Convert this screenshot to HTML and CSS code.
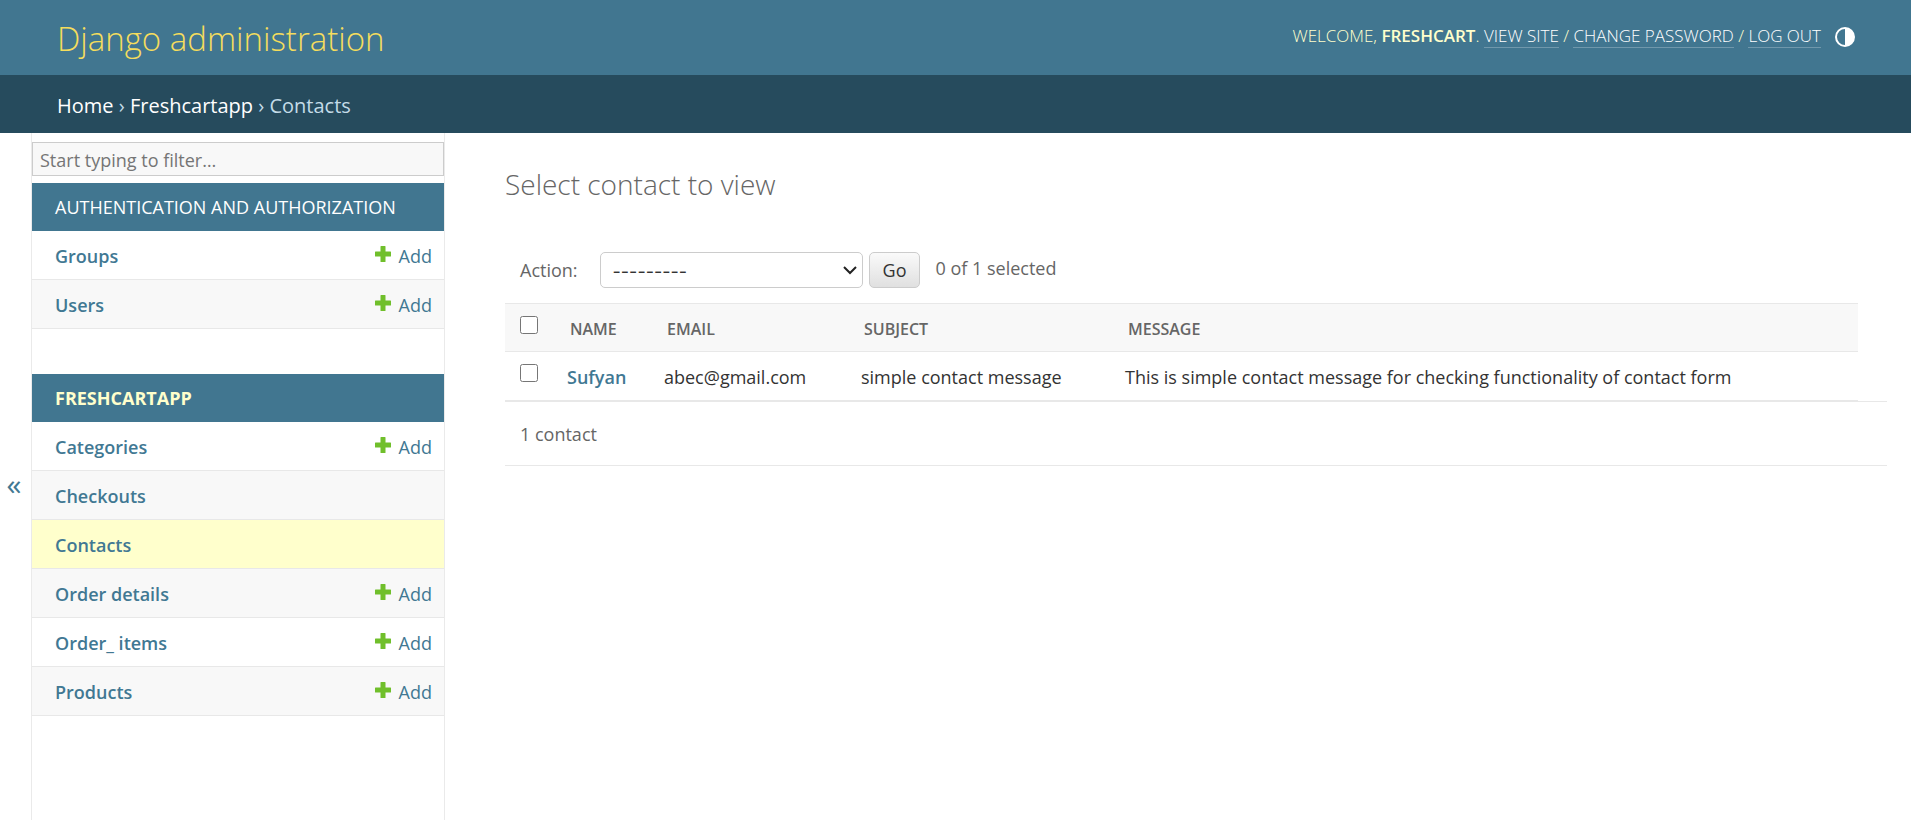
FILE: index.html
```html
<!DOCTYPE html>
<html lang="en">
<head>
<meta charset="utf-8">
<title>Select contact to view | Django site admin</title>
<link rel="stylesheet" href="styles.css">
</head>
<body>
<svg class="sprite" aria-hidden="true">
  <symbol id="plus" viewBox="0 0 16 16"><path fill="#70bf2b" d="M6 0h4q.5 0 .5.5v5h5q.5 0 .5.500v4q0 .5-.5.5h-5v5q0 .5-.5.5H6q-.5 0-.5-.5v-5h-5Q0 10.500 0 10V6q0-.5.5-.5h5v-5Q5.500 0 6 0z"/></symbol>
</svg>
<header class="header">
  <h1 class="site-name"><a href="#">Django administration</a></h1>
  <div class="user-tools">
    <span>Welcome, <strong>freshcart</strong>. <a href="#">View site</a> / <a href="#">Change password</a> / <a href="#">Log out</a></span>
    <button class="theme-toggle" type="button" aria-label="Toggle theme">
      <svg viewBox="0 0 20 20"><circle cx="10" cy="10" r="9" fill="none" stroke="#fff" stroke-width="2"/><path d="M10 1a9 9 0 0 1 0 18z" fill="#fff"/></svg>
    </button>
  </div>
</header>
<nav class="breadcrumbs" aria-label="Breadcrumbs"><a href="#">Home</a> › <a href="#">Freshcartapp</a> › Contacts</nav>
<div class="main">
  <button class="toggle-nav" type="button" aria-label="Toggle navigation">«</button>
  <nav class="sidebar" aria-label="Sidebar">
    <input class="filter" type="search" placeholder="Start typing to filter…" aria-label="Filter navigation items">
    <section class="module">
      <h2 class="caption"><a href="#">Authentication and Authorization</a></h2>
      <ul class="models">
        <li><a class="model" href="#">Groups</a><a class="add" href="#"><svg><use href="#plus"/></svg>Add</a></li>
        <li><a class="model" href="#">Users</a><a class="add" href="#"><svg><use href="#plus"/></svg>Add</a></li>
      </ul>
    </section>
    <section class="module">
      <h2 class="caption current-app"><a href="#">Freshcartapp</a></h2>
      <ul class="models">
        <li><a class="model" href="#">Categories</a><a class="add" href="#"><svg><use href="#plus"/></svg>Add</a></li>
        <li><a class="model" href="#">Checkouts</a></li>
        <li class="current"><a class="model" href="#">Contacts</a></li>
        <li><a class="model" href="#">Order details</a><a class="add" href="#"><svg><use href="#plus"/></svg>Add</a></li>
        <li><a class="model" href="#">Order_ items</a><a class="add" href="#"><svg><use href="#plus"/></svg>Add</a></li>
        <li><a class="model" href="#">Products</a><a class="add" href="#"><svg><use href="#plus"/></svg>Add</a></li>
      </ul>
    </section>
  </nav>
  <main class="content">
    <h2 class="title">Select contact to view</h2>
    <form class="changelist">
      <div class="actions">
        <label for="action">Action:</label>
        <select id="action"><option>---------</option></select>
        <button class="go" type="submit">Go</button>
        <span class="counter">0 of 1 selected</span>
      </div>
      <table class="results">
        <colgroup><col class="col-check"><col class="col-name"><col class="col-email"><col class="col-subject"><col></colgroup>
        <thead>
          <tr><th><input type="checkbox" aria-label="Select all contacts"></th><th scope="col">Name</th><th scope="col">Email</th><th scope="col">Subject</th><th scope="col">Message</th></tr>
        </thead>
        <tbody>
          <tr><td><input type="checkbox" aria-label="Select Sufyan"></td><th scope="row"><a href="#">Sufyan</a></th><td>abec@gmail.com</td><td>simple contact message</td><td>This is simple contact message for checking functionality of contact form</td></tr>
        </tbody>
      </table>
      <p class="paginator">1 contact</p>
    </form>
  </main>
</div>
</body>
</html>
```
FILE: styles.css
```css
* { box-sizing: border-box; }
body {
  margin: 0;
  min-height: 100vh;
  display: flex;
  flex-direction: column;
  background: #fff;
  color: #333;
  font: 18px/24px "Open Sans", "Noto Sans", sans-serif;
}
a { color: #417893; text-decoration: none; }
button, input, select { font: inherit; }
.sprite { display: none; }

.header {
  display: flex;
  justify-content: space-between;
  align-items: center;
  height: 75px;
  padding: 0 56px 0 57px;
  background: #417690;
  color: #ffc;
}
.site-name { margin: 0; padding-top: 2px; font-size: 33px; line-height: 44px; font-weight: 300; }
.site-name a { color: #f5dd5d; }
.user-tools {
  display: flex;
  align-items: center;
  gap: 14px;
  padding-bottom: 4px;
  font-size: 17px;
  font-weight: 300;
  line-height: 20px;
  text-transform: uppercase;
}
.user-tools strong { font-weight: 600; }
.user-tools a { color: #fff; border-bottom: 1px solid rgba(255, 255, 255, .25); }
.theme-toggle {
  display: flex;
  padding: 3px 0 0;
  border: 0;
  background: none;
}
.theme-toggle svg { width: 20px; height: 20px; }

.breadcrumbs {
  padding: 19px 57px 15px;
  background: #264b5d;
  color: #c4dce8;
  font-size: 20px;
}
.breadcrumbs a { color: #fff; }

.main { flex: 1; display: flex; }
.toggle-nav {
  width: 31px;
  padding: 14px 3px 0 0;
  border: 0;
  background: none;
  color: #417893;
  font-size: 30px;
}
.sidebar {
  width: 414px;
  flex: none;
  padding-top: 9px;
  border: solid #eaeaea;
  border-width: 0 1px;
}
.filter {
  display: block;
  width: 100%;
  height: 34px;
  margin: 0 0 7px;
  padding: 2px 7px 0;
  border: 1px solid #ccc;
  border-radius: 0;
  appearance: none;
  background: #f8f8f8;
}
.filter::placeholder { color: #757575; }
.module { margin-bottom: 45px; }
.caption {
  margin: 0;
  padding: 12px 23px;
  background: #417690;
  font-size: 18px;
  font-weight: 400;
  text-transform: uppercase;
}
.caption a { color: #fff; }
.current-app { font-weight: 700; }
.current-app a { color: #ffc; }
.models { margin: 0; padding: 0; list-style: none; }
.models li {
  display: flex;
  justify-content: space-between;
  padding: 13px 12px 11px 23px;
  border-bottom: 1px solid #e8e8e8;
}
.models li:nth-child(even) { background: #f8f8f8; }
.models li.current { background: #ffc; }
.model { font-weight: 600; }
.add { display: flex; gap: 8px; }
.add svg { width: 16px; height: 16px; margin-top: 2px; }

.content { flex: 1; padding: 35px 24px 0 60px; color: #666; }
.title { margin: 0 0 52px; font-size: 28px; line-height: 32px; font-weight: 300; }
.actions {
  display: flex;
  align-items: center;
  padding: 0 15px 15px;
}
.actions select {
  width: 263px;
  height: 36px;
  margin: 0 6px 0 22px;
  padding: 4px 12px 0;
  border: 1px solid #ccc;
  border-radius: 5px;
  appearance: none;
  background: #fff url("data:image/svg+xml,%3Csvg xmlns='http://www.w3.org/2000/svg' width='14' height='10'%3E%3Cpath d='M1 2l6 6 6-6' fill='none' stroke='%23222' stroke-width='2'/%3E%3C/svg%3E") no-repeat right 5px center;
  color: #333;
  font-family: Inter, sans-serif;
}
.go {
  height: 36px;
  padding: 0 13px;
  border: 1px solid #ccc;
  border-radius: 5px;
  background: linear-gradient(#fafafa, #e0e0e0);
  color: #333;
}
.counter { margin-left: 15px; padding-bottom: 4px; }
.results {
  width: calc(100% - 29px);
  table-layout: fixed;
  border-collapse: separate;
  border-spacing: 0;
  color: #333;
}
.col-check { width: 47px; }
.col-name { width: 97px; }
.col-email { width: 197px; }
.col-subject { width: 264px; }
.results th, .results td {
  height: 49px;
  padding: 2px 0 0 15px;
  border-bottom: 1px solid #e8e8e8;
  text-align: left;
  white-space: nowrap;
}
.results th { font-weight: 600; }
.results thead th {
  padding-left: 18px;
  border-top: 1px solid #e8e8e8;
  background: #f8f8f8;
  color: #666;
  font-size: 16px;
  text-transform: uppercase;
}
.results thead th:first-child { padding-left: 15px; }
.results input { display: block; width: 18px; height: 18px; margin: 0 0 8px; }
.paginator {
  margin: 0;
  padding: 20px 15px 19px;
  border: solid #e8e8e8;
  border-width: 1px 0;
}
```
